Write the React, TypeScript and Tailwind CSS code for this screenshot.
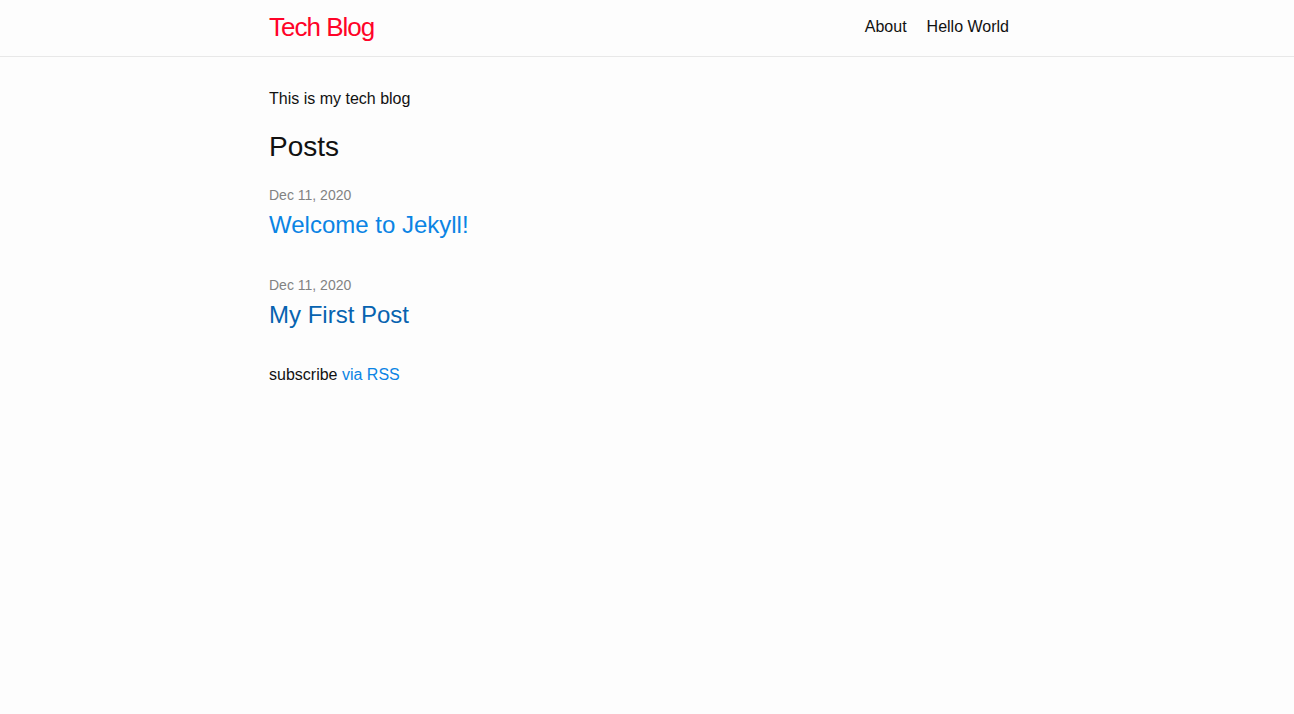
const posts = [
  { date: 'Dec 11, 2020', title: 'Welcome to Jekyll!', color: 'text-[#0a84e4]' },
  { date: 'Dec 11, 2020', title: 'My First Post', color: 'text-[#0763b0]' },
];

const font = { fontFamily: '"Liberation Sans", Arial, Helvetica, sans-serif' };

export default function App() {
  return (
    <div className="min-h-[714px] bg-[#fdfdfd] text-[16px] leading-[1.5] text-[#111]" style={font}>
      <header className="min-h-[57px] border-b border-[#e8e8e8]">
        <div className="pr-4">
          <div className="mx-auto flex max-w-[800px] items-start justify-between px-[30px]">
            <a href="#" className="text-[26px] leading-[54px] font-light tracking-[-1px] text-[#ff0328]">
              Tech Blog
            </a>
            <nav className="flex leading-[54px]">
              <a href="#" className="ml-5 text-[#111]">About</a>
              <a href="#" className="ml-5 text-[#111]">Hello World</a>
            </nav>
          </div>
        </div>
      </header>

      <main className="pr-4">
        <div className="mx-auto max-w-[800px] px-[30px] py-[30px]">
          <p className="mb-[15px]">This is my tech blog</p>
          <h2 className="mb-[15px] text-[28px] leading-[42px]">Posts</h2>
          <ul className="mb-[30px]">
            {posts.map((post) => (
              <li key={post.title} className="mb-[30px]">
                <span className="block text-[14px] leading-[24px] text-[#828282]">{post.date}</span>
                <h3 className="text-[24px] leading-[36px]">
                  <a href="#" className={post.color}>{post.title}</a>
                </h3>
              </li>
            ))}
          </ul>
          <p>
            subscribe <a href="#" className="text-[#0a84e4]">via RSS</a>
          </p>
        </div>
      </main>
    </div>
  );
}
